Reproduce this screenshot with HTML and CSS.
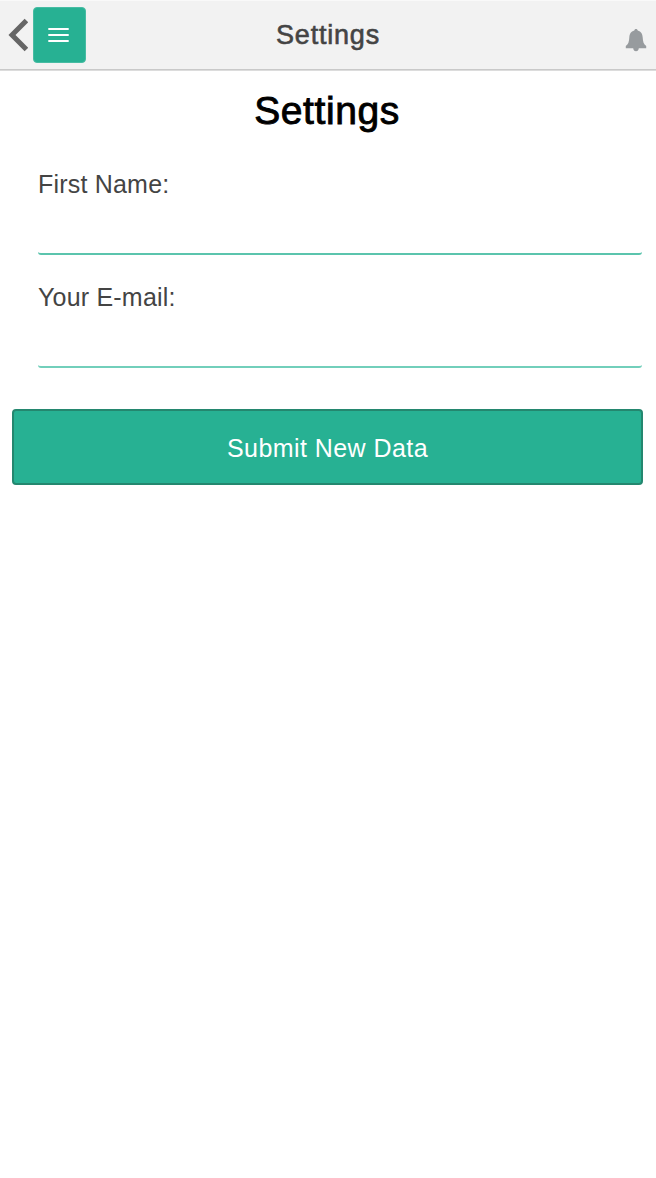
FILE: index.html
```
<!DOCTYPE html>
<html lang="en">
<head>
<meta charset="utf-8">
<title>Settings</title>
<link rel="stylesheet" href="styles.css">
</head>
<body>
<header class="bar">
  <div class="bar-left">
    <svg class="back" width="20" height="34" viewBox="0 0 20 34"><path d="M18.400 2.500 4 17 18.400 31.500" fill="none" stroke="#666" stroke-width="5"/></svg>
    <div class="menu" role="button" aria-label="Menu">
      <svg width="21" height="16" viewBox="0 0 21 16"><path d="M.3 2h20.400M.3 8h20.400M.3 14h20.400" stroke="#fff" stroke-width="2"/></svg>
    </div>
  </div>
  <div class="bar-title"><span class="text-nav">Settings</span></div>
  <div class="bar-right">
    <svg width="22" height="24" viewBox="0 0 22 24"><path d="M11 .9c1 0 1.600.6 1.700 1.500 3.500.9 4.800 3.600 5 7 .2 4.300 1 6.500 3.500 8.600v2.200H.8v-2.200c2.500-2.100 3.300-4.300 3.500-8.600.2-3.400 1.500-6.100 5-7C9.400 1.500 10 .9 11 .9zM8.200 20.200h5.600c-.2 1.900-1.200 3-2.800 3s-2.600-1.100-2.800-3z" fill="#979b9e"/></svg>
  </div>
</header>
<main class="content">
  <h1 class="heading"><span class="text-heading">Settings</span></h1>
  <form class="form">
    <div class="field">
      <label class="label" for="name"><span class="text-name">First Name:</span></label>
      <input class="input" id="name" type="text">
    </div>
    <div class="field">
      <label class="label" for="email"><span class="text-email">Your E-mail:</span></label>
      <input class="input input-light" id="email" type="text">
    </div>
    <button class="submit" type="button"><span class="text-submit">Submit New Data</span></button>
  </form>
</main>
</body>
</html>
```
FILE: styles.css
```
* { box-sizing: border-box; }
body {
  margin: 0;
  min-height: 1178px;
  background: #fff;
  color: #444;
  font-family: "Liberation Sans", Arial, sans-serif;
  font-size: 25px;
}
svg { display: block; }
.bar {
  display: grid;
  grid-template-columns: 100px 1fr 100px;
  height: 71px;
  background: linear-gradient(#c9c9c9, #c9c9c9) 0 100% / 100% 1px no-repeat #f2f2f2;
  border-top: 1px solid #f9f9f9;
  border-bottom: 1px solid #dcdcdc;
}
.bar-left { display: flex; align-items: flex-start; padding: 7px 0 0 8px; }
.back { margin-top: 10px; }
.menu {
  display: flex;
  align-items: center;
  justify-content: center;
  width: 53px;
  height: 55px;
  margin-left: 5px;
  background: #27b193;
  border: 1px solid #47bca3;
  border-radius: 4px;
}
.bar-left .menu { margin-top: -1px; height: 56px; }
.menu svg { margin: -1px 2px 0 0; }
.bar-title {
  padding-top: 18px;
  line-height: 32px;
  text-align: center;
  font-size: 27px;
  -webkit-text-stroke: 0.6px #444;
}
.text-nav { letter-spacing: 0.8px; }
.bar-right { display: flex; justify-content: flex-end; padding: 27px 9px 0 0; }
.content { padding: 18px 14px 0 12px; }
.heading {
  margin: 0;
  color: #000;
  font-size: 39px;
  line-height: 44px;
  font-weight: 400;
  text-align: center;
  -webkit-text-stroke: 0.9px #000;
}
.text-heading { letter-spacing: 0.6px; }
.form { padding-top: 36px; }
.field { height: 113px; padding-left: 26px; }
.label { display: block; line-height: 30px; }
.text-name, .text-email { letter-spacing: 0.2px; }
.input {
  display: block;
  width: 100%;
  height: 48px;
  margin-top: 8px;
  padding: 0;
  background: transparent;
  border: 0 solid transparent;
  border-bottom: 2px solid #5bc4ad;
  border-radius: 3px;
  outline: 0;
  font: inherit;
}
.input-light { border-bottom-color: #72cfbb; }
.submit {
  display: block;
  width: 631px;
  height: 76px;
  margin-top: 14px;
  padding: 3px 0 0;
  background: #27b193;
  border: 2px solid #24876f;
  border-radius: 4px;
  color: #fff;
  font: inherit;
  text-align: center;
}
.text-submit { letter-spacing: 0.43px; }
```
